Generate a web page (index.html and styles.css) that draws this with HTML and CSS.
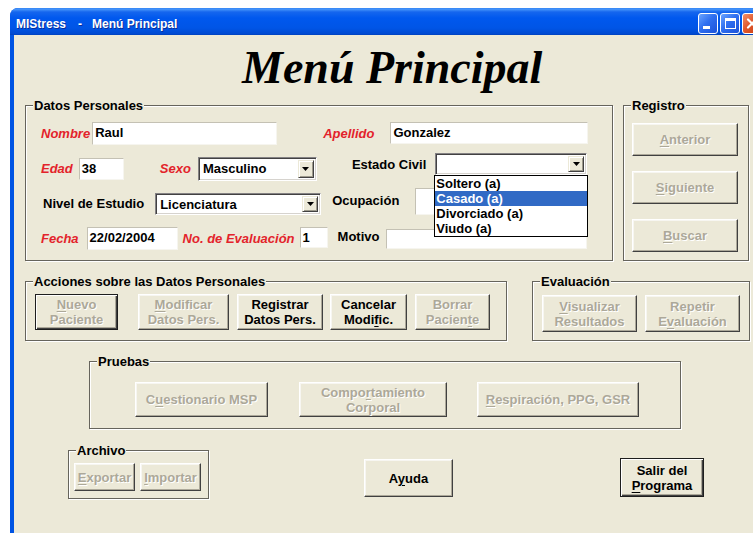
FILE: index.html
```html
<!DOCTYPE html>
<html lang="es">
<head>
<meta charset="utf-8">
<title>MIStress - Menú Principal</title>
<link rel="stylesheet" href="styles.css">
</head>
<body>
<div class="window">
  <header class="titlebar">
    <div class="title"><span>MIStress</span><span class="dash">-</span><span class="title-main">Menú Principal</span></div>
    <div class="caption">
      <span class="cap cap-min"><span class="glyph-min"></span></span>
      <span class="cap cap-max"><span class="glyph-max"></span></span>
      <span class="cap cap-close"><svg width="18" height="19" viewBox="0 0 18 19"><path d="M5 5.5 L13 13.5 M13 5.5 L5 13.5" stroke="#fff" stroke-width="2.2" stroke-linecap="round"/></svg></span>
    </div>
  </header>

  <main class="client">
    <h1 class="heading">Menú Principal</h1>

    <div class="band band-1">
      <section class="group g-datos">
        <h2 class="legend">Datos Personales</h2>
        <div class="frow">
          <span class="lbl req l-nombre">Nombre</span>
          <span class="tb t-nombre">Raul</span>
          <span class="lbl req l-apellido">Apellido</span>
          <span class="tb t-apellido">Gonzalez</span>
        </div>
        <div class="frow">
          <span class="lbl req l-edad">Edad</span>
          <span class="tb t-edad">38</span>
          <span class="lbl req l-sexo">Sexo</span>
          <span class="combo c-sexo">
            <span class="combo-val">Masculino</span>
            <span class="combo-btn"><svg width="7" height="4" viewBox="0 0 7 4"><path d="M0 0H7L3.5 4Z" fill="#000"/></svg></span>
          </span>
          <span class="lbl l-estado">Estado Civil</span>
          <span class="combo c-estado">
            <span class="combo-val"></span>
            <span class="combo-btn"><svg width="7" height="4" viewBox="0 0 7 4"><path d="M0 0H7L3.5 4Z" fill="#000"/></svg></span>
            <ul class="droplist">
              <li>Soltero (a)</li>
              <li class="sel">Casado (a)</li>
              <li>Divorciado (a)</li>
              <li>Viudo (a)</li>
            </ul>
          </span>
        </div>
        <div class="frow">
          <span class="lbl l-nivel">Nivel de Estudio</span>
          <span class="combo c-nivel">
            <span class="combo-val">Licenciatura</span>
            <span class="combo-btn"><svg width="7" height="4" viewBox="0 0 7 4"><path d="M0 0H7L3.5 4Z" fill="#000"/></svg></span>
          </span>
          <span class="lbl l-ocup">Ocupación</span>
          <span class="tb t-ocup"></span>
        </div>
        <div class="frow">
          <span class="lbl req l-fecha">Fecha</span>
          <span class="tb t-fecha">22/02/2004</span>
          <span class="lbl req l-noeval">No. de Evaluación</span>
          <span class="tb t-noeval">1</span>
          <span class="lbl l-motivo">Motivo</span>
          <span class="tb t-motivo"></span>
        </div>
      </section>

      <section class="group g-registro">
        <h2 class="legend">Registro</h2>
        <button class="btn b-reg" disabled><u>A</u>nterior</button>
        <button class="btn b-reg" disabled><u>S</u>iguiente</button>
        <button class="btn b-reg" disabled><u>B</u>uscar</button>
      </section>
    </div>

    <div class="band band-2">
      <section class="group g-acciones">
        <h2 class="legend">Acciones sobre las Datos Personales</h2>
        <button class="btn def b-nuevo" disabled><u>N</u>uevo<br>Paciente</button>
        <button class="btn b-modif" disabled><u>M</u>odificar<br>Datos Pers.</button>
        <button class="btn b-registrar">Registrar<br>Datos Pers.</button>
        <button class="btn b-cancelar">Cancelar<br>Modi<u>f</u>ic.</button>
        <button class="btn b-borrar" disabled>Borrar<br>Pacien<u>t</u>e</button>
      </section>

      <section class="group g-eval">
        <h2 class="legend">Evaluación</h2>
        <button class="btn b-eval" disabled><u>V</u>isualizar<br>Resultados</button>
        <button class="btn b-eval" disabled>Repetir<br>E<u>v</u>aluación</button>
      </section>
    </div>

    <section class="group g-pruebas">
      <h2 class="legend">Pruebas</h2>
      <button class="btn b-cuest" disabled>C<u>u</u>estionario MSP</button>
      <button class="btn b-comp" disabled>Compo<u>r</u>tamiento<br>Corporal</button>
      <button class="btn b-resp" disabled><u>R</u>espiración, PPG, GSR</button>
    </section>

    <div class="band band-4">
      <section class="group g-archivo">
        <h2 class="legend">Archivo</h2>
        <button class="btn b-arch" disabled><u>E</u>xportar</button>
        <button class="btn b-arch" disabled><u>I</u>mportar</button>
      </section>
      <button class="btn b-ayuda">A<u>y</u>uda</button>
      <button class="btn def b-salir">Salir del<br><u>P</u>rograma</button>
    </div>
  </main>
</div>
</body>
</html>
```

FILE: styles.css
```css
* {
  box-sizing: border-box;
}

html,
body {
  margin: 0;
  padding: 0;
}

body {
  width: 753px;
  height: 533px;
  overflow: hidden;
  background: #fff;
  font-family: "Liberation Sans", Arial, sans-serif;
  font-size: 13px;
  font-weight: bold;
  color: #000;
}

/* ---------- window frame ---------- */

.window {
  width: 757px;
  margin: 8px 0 0 10px;
  background: #0054e3;
  border-radius: 8px 8px 0 0;
  overflow: hidden;
}

.titlebar {
  height: 27px;
  display: flex;
  align-items: flex-start;
  padding: 0 5px 0 6px;
  background: linear-gradient(to bottom,
      #2a7cf2 0px, #4a98fb 1px, #1566ee 4px, #0058ee 10px,
      #0055e6 20px, #0049d0 26px, #003fb8 27px);
}

.title {
  display: flex;
  margin-top: 9px;
  font-size: 12px;
  line-height: 14px;
  color: #fff;
  text-shadow: 1px 1px 0 #0b2f9a;
}

.dash {
  margin: 0 10px 0 12px;
}

.caption {
  display: flex;
  gap: 2px;
  margin: 5px 0 0 auto;
}

.cap {
  width: 20px;
  height: 21px;
  border: 1px solid #fff;
  border-radius: 3px;
  display: flex;
  background: linear-gradient(135deg, #6aa4ff 0%, #2f6ff0 45%, #1c52d8 100%);
}

.cap-min {
  align-items: flex-end;
  padding: 0 0 4px 4px;
}

.glyph-min {
  width: 7px;
  height: 3px;
  background: #fff;
}

.cap-max {
  align-items: center;
  justify-content: center;
}

.glyph-max {
  width: 11px;
  height: 11px;
  border: 1px solid #fff;
  border-top-width: 3px;
}

.cap-close {
  align-items: center;
  justify-content: center;
  background: linear-gradient(135deg, #f0906a 0%, #e2582c 45%, #c53c12 100%);
}

/* ---------- client area ---------- */

.client {
  margin-left: 4px;
  height: 498px;
  padding-top: 10px;
  background: #ece9d8;
}

.heading {
  margin: 0 0 0 228px;
  font-family: "Liberation Serif", "Times New Roman", serif;
  font-style: italic;
  font-weight: bold;
  font-size: 46px;
  line-height: 46px;
  color: #000;
}

.band {
  display: flex;
  margin-left: 11px;
}

.band-1 {
  margin-top: 14px;
  gap: 10px;
  height: 156px;
}

.band-2 {
  margin-top: 20px;
  gap: 25px;
  height: 60px;
}

.band-4 {
  margin: 21px 0 0 54px;
  align-items: flex-start;
}

/* ---------- group boxes ---------- */

.group {
  position: relative;
  border: 1px solid #66645c;
  box-shadow: inset 1px 1px 0 #fff, 1px 1px 0 #fff;
}

.legend {
  position: absolute;
  top: -8px;
  left: 7px;
  margin: 0;
  padding: 0 1px;
  background: #ece9d8;
  font-size: 13px;
  line-height: 15px;
  font-weight: bold;
  white-space: nowrap;
}

.g-datos {
  width: 588px;
  padding-top: 14px;
  display: flex;
  flex-direction: column;
  gap: 8px;
}

.g-registro {
  width: 126px;
  padding: 17px 0 0 8px;
  display: flex;
  flex-direction: column;
  align-items: flex-start;
  gap: 15px;
}

.g-acciones {
  width: 482px;
  padding: 12px 0 0 9px;
  display: flex;
  align-items: flex-start;
}

.g-eval {
  width: 218px;
  padding: 13px 0 0 9px;
  display: flex;
  align-items: flex-start;
  gap: 8px;
}

.g-pruebas {
  width: 592px;
  height: 68px;
  margin: 20px 0 0 75px;
  padding: 20px 0 0 45px;
  display: flex;
  align-items: flex-start;
}

.g-archivo {
  width: 141px;
  height: 49px;
  padding: 12px 0 0 5px;
  display: flex;
  align-items: flex-start;
  gap: 5px;
}

/* ---------- form rows ---------- */

.frow {
  height: 27px;
  display: flex;
  align-items: center;
}

.lbl {
  white-space: nowrap;
  line-height: 15px;
}

.req {
  color: #e3232b;
  font-style: italic;
}

.tb {
  display: block;
  background: #fff;
  border: 1px solid;
  border-color: #c4c1b4 #f6f5ef #f6f5ef #c4c1b4;
  padding: 2px 2px 0;
  line-height: 15px;
  white-space: nowrap;
}

.combo {
  position: relative;
  display: flex;
  background: #fff;
  border: 1px solid;
  border-color: #848284 #fff #fff #848284;
  box-shadow: inset 1px 1px 0 #424142, inset -1px -1px 0 #d6d3ce;
  padding: 2px;
}

.combo-val {
  flex: 1;
  padding-left: 2px;
  line-height: 17px;
}

.combo-btn {
  width: 16px;
  display: flex;
  align-items: center;
  justify-content: center;
  background: #ece9d8;
  border: 1px solid;
  border-color: #ece9d8 #424142 #424142 #ece9d8;
  box-shadow: inset 1px 1px 0 #fff, inset -1px -1px 0 #9d9a8c;
}

.droplist {
  position: absolute;
  top: 100%;
  left: -2px;
  z-index: 2;
  width: 154px;
  margin: 1px 0 0;
  padding: 0;
  list-style: none;
  background: #fff;
  border: 1px solid #000;
}

.droplist li {
  height: 15px;
  padding-left: 1px;
  line-height: 15px;
}

.droplist .sel {
  background: #316ac5;
  color: #fff;
}

/* field placement, row by row */
.l-nombre { margin-left: 15px; }
.t-nombre { margin-left: 2px; width: 185px; height: 23px; }
.l-apellido { margin-left: 46px; }
.t-apellido { margin-left: 16px; width: 198px; height: 22px; margin-bottom: 2px; }

.l-edad { margin-left: 15px; }
.t-edad { margin-left: 6px; width: 45px; height: 22px; }
.l-sexo { margin-left: 36px; }
.c-sexo { margin-left: 7px; width: 119px; height: 24px; }
.l-estado { margin-left: 35px; margin-bottom: 9px; }
.c-estado { margin-left: 9px; width: 152px; height: 22px; margin-bottom: 9px; }

.l-nivel { margin-left: 17px; }
.c-nivel { margin-left: 11px; width: 166px; height: 22px; }
.l-ocup { margin-left: 11px; margin-bottom: 6px; }
.t-ocup { margin-left: 16px; width: 173px; height: 27px; margin-bottom: 4px; }

.l-fecha { margin-left: 15px; }
.t-fecha { margin-left: 8px; width: 91px; height: 23px; }
.l-noeval { margin-left: 5px; }
.t-noeval { margin-left: 5px; width: 28px; height: 21px; margin-bottom: 2px; }
.l-motivo { margin-left: 10px; margin-bottom: 5px; }
.t-motivo { margin-left: 7px; width: 201px; height: 20px; }

/* ---------- push buttons ---------- */

.btn {
  margin: 0;
  padding: 0;
  font-family: inherit;
  font-size: 13px;
  font-weight: bold;
  line-height: 15px;
  color: #000;
  text-align: center;
  background: #ece9d8;
  border: 1px solid;
  border-color: #fff #404040 #404040 #fff;
  border-radius: 0;
  box-shadow: inset -1px -1px 0 #aca899, inset 1px 1px 0 #f7f6f1;
}

.btn:disabled {
  color: #aca899;
  text-shadow: 1px 1px 0 #fff;
}

.btn u {
  text-decoration-thickness: 1px;
  text-underline-offset: 2px;
}

.btn.def {
  border-color: #1e1e1e;
  box-shadow: inset 1px 1px 0 #fff, inset -1px -1px 0 #404040, inset -2px -2px 0 #aca899;
}

.b-reg { width: 106px; height: 33px; }

.b-nuevo { width: 83px; height: 36px; }
.b-modif { margin-left: 20px; width: 91px; height: 36px; }
.b-registrar { margin-left: 8px; width: 86px; height: 36px; }
.b-cancelar { margin-left: 7px; width: 77px; height: 36px; }
.b-borrar { margin-left: 8px; width: 75px; height: 36px; }

.b-eval { width: 95px; height: 37px; }

.b-cuest { width: 133px; height: 35px; }
.b-comp { margin-left: 31px; width: 148px; height: 35px; }
.b-resp { margin-left: 30px; width: 162px; height: 35px; }

.b-arch { width: 61px; height: 28px; }

.b-ayuda { margin: 9px 0 0 155px; width: 89px; height: 38px; }
.b-salir { margin: 8px 0 0 167px; width: 84px; height: 39px; }
```
